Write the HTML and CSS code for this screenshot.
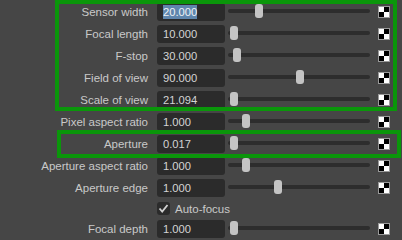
FILE: index.html
```html
<!DOCTYPE html>
<html>
<head>
<meta charset="utf-8">
<link rel="stylesheet" href="styles.css">
</head>
<body>
<div class="panel">
  <div class="row">
    <div class="label">Sensor width</div>
    <div class="field"><span class="sel">20.000</span></div>
    <div class="slider"><div class="thumb" style="left:27px"></div></div>
    <div class="key"></div>
  </div>
  <div class="row">
    <div class="label">Focal length</div>
    <div class="field">10.000</div>
    <div class="slider"><div class="thumb" style="left:2px"></div></div>
    <div class="key"></div>
  </div>
  <div class="row">
    <div class="label">F-stop</div>
    <div class="field">30.000</div>
    <div class="slider"><div class="thumb" style="left:5px"></div></div>
    <div class="key"></div>
  </div>
  <div class="row">
    <div class="label">Field of view</div>
    <div class="field">90.000</div>
    <div class="slider"><div class="thumb" style="left:68px"></div></div>
    <div class="key"></div>
  </div>
  <div class="row">
    <div class="label">Scale of view</div>
    <div class="field">21.094</div>
    <div class="slider"><div class="thumb" style="left:2px"></div></div>
    <div class="key"></div>
  </div>
  <div class="row">
    <div class="label">Pixel aspect ratio</div>
    <div class="field">1.000</div>
    <div class="slider"><div class="thumb" style="left:14px"></div></div>
    <div class="key"></div>
  </div>
  <div class="row">
    <div class="label">Aperture</div>
    <div class="field">0.017</div>
    <div class="slider"><div class="thumb" style="left:2px"></div></div>
    <div class="key"></div>
  </div>
  <div class="row">
    <div class="label">Aperture aspect ratio</div>
    <div class="field">1.000</div>
    <div class="slider"><div class="thumb" style="left:14px"></div></div>
    <div class="key"></div>
  </div>
  <div class="row">
    <div class="label">Aperture edge</div>
    <div class="field">1.000</div>
    <div class="slider"><div class="thumb" style="left:46px"></div></div>
    <div class="key"></div>
  </div>
  <div class="row check-row">
    <div class="label"></div>
    <div class="checkbox">
      <svg width="13" height="13" viewBox="0 0 13 13"><polyline points="2.5,6.5 5.2,9.5 10.5,3" fill="none" stroke="#d2d2d2" stroke-width="1.8"/></svg>
    </div>
    <div class="check-label">Auto-focus</div>
  </div>
  <div class="row">
    <div class="label">Focal depth</div>
    <div class="field">1.000</div>
    <div class="slider"><div class="thumb" style="left:2px"></div></div>
    <div class="key"></div>
  </div>
</div>
<div class="highlight hl-camera"></div>
<div class="highlight hl-aperture"></div>
</body>
</html>
```

FILE: styles.css
```css
html, body {
  margin: 0;
  padding: 0;
  background: #464646;
  width: 402px;
  height: 240px;
  overflow: hidden;
}

body {
  position: relative;
  font-family: "Liberation Sans", Arial, sans-serif;
  font-size: 11px;
  color: #c9c9c9;
}

.panel {
  display: flex;
  flex-direction: column;
  padding-top: 1px;
}

.row {
  display: flex;
  align-items: center;
  height: 22px;
}

.check-row {
  height: 19px;
}

.label {
  width: 148px;
  flex: none;
  text-align: right;
  white-space: nowrap;
  font-size: 11.5px;
}

.field {
  flex: none;
  width: 62px;
  height: 18px;
  margin-left: 9px;
  padding-left: 6px;
  box-sizing: content-box;
  background: #2b2b2b;
  border-radius: 3px;
  color: #d4d4d4;
  line-height: 18px;
  font-size: 11.2px;
}

.sel {
  background: #5f86ad;
  color: #eef2f6;
  padding: 1px 0;
}

.slider {
  flex: none;
  position: relative;
  width: 142px;
  height: 4px;
  margin-left: 3px;
  margin-top: -2px;
  background: #2d2d2d;
  border-radius: 2px;
}

.thumb {
  position: absolute;
  top: -5px;
  width: 8px;
  height: 14px;
  background: #c4c4c4;
  border-radius: 3px;
}

.key {
  flex: none;
  width: 10px;
  height: 10px;
  margin-left: 8px;
  margin-top: -1px;
  border: 1px solid #9a9a9a;
  background: conic-gradient(#000 0 25%, #fff 0 50%, #000 0 75%, #fff 0);
}

.checkbox {
  flex: none;
  width: 13px;
  height: 13px;
  margin-left: 9px;
  background: #2b2b2b;
  border-radius: 3px;
  display: flex;
}

.check-label {
  margin-left: 5px;
  font-size: 11.5px;
}

.highlight {
  position: absolute;
  border: 4px solid #0a960a;
  box-sizing: border-box;
}

.hl-camera {
  left: 55px;
  top: 0;
  width: 342px;
  height: 111px;
}

.hl-aperture {
  left: 57px;
  top: 130px;
  width: 344px;
  height: 28px;
}
```
